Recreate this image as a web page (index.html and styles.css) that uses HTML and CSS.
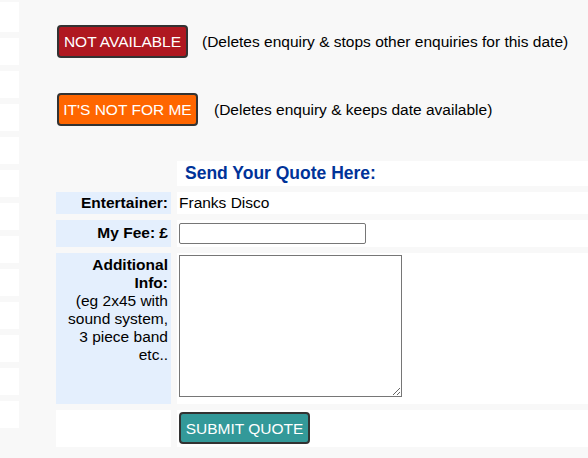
FILE: index.html
```html
<!DOCTYPE html>
<html lang="en">
<head>
    <meta charset="UTF-8">
    <meta name="viewport" content="width=device-width, initial-scale=1.0">
    <title>Enquiry Reply</title>
    <link rel="stylesheet" href="styles.css">
</head>
<body>
    <div class="page">
        <!-- edge of the enquiry list table -->
        <div class="side-list">
            <div class="side-cell first"></div>
            <div class="side-cell"></div>
            <div class="side-cell"></div>
            <div class="side-cell"></div>
            <div class="side-cell"></div>
            <div class="side-cell"></div>
            <div class="side-cell"></div>
            <div class="side-cell"></div>
            <div class="side-cell"></div>
            <div class="side-cell"></div>
            <div class="side-cell"></div>
            <div class="side-cell"></div>
            <div class="side-cell"></div>
        </div>

        <div class="main">
            <div class="action-row">
                <button class="btn btn-red">NOT AVAILABLE</button>
                <span class="action-note note-red">(Deletes enquiry &amp; stops other enquiries for this date)</span>
            </div>
            <div class="action-row second">
                <button class="btn btn-orange">IT'S NOT FOR ME</button>
                <span class="action-note note-orange">(Deletes enquiry &amp; keeps date available)</span>
            </div>

            <table class="quote-table">
                <tr class="row-head">
                    <td class="blank"></td>
                    <td class="value head">Send Your Quote Here:</td>
                </tr>
                <tr class="row-ent">
                    <td class="label">Entertainer:</td>
                    <td class="value">Franks Disco</td>
                </tr>
                <tr class="row-fee">
                    <td class="label">My Fee: &pound;</td>
                    <td class="value"><input type="text" class="fee-input"></td>
                </tr>
                <tr class="row-info">
                    <td class="label">Additional Info:<br><span class="hint">(eg 2x45 with sound system, 3 piece band etc..</span></td>
                    <td class="value"><textarea class="info-box"></textarea></td>
                </tr>
                <tr class="row-submit">
                    <td class="value"></td>
                    <td class="value"><button class="btn btn-teal">SUBMIT QUOTE</button></td>
                </tr>
            </table>
        </div>
    </div>
</body>
</html>
```

FILE: styles.css
```css
html, body {
    margin: 0;
    padding: 0;
    overflow: hidden;
}
body {
    background-color: #f8f8f8;
    color: #000000;
    font-family: "Liberation Sans", Arial, sans-serif;
    font-size: 15.5px;
}
.page {
    display: flex;
    width: 588px;
    height: 458px;
}
.side-list {
    width: 19px;
    flex-shrink: 0;
    display: flex;
    flex-direction: column;
    gap: 6px;
    padding-top: 2px;
}
.side-cell {
    height: 27px;
    background-color: #ffffff;
}
.side-cell.first {
    height: 30px;
}
.main {
    padding-left: 31px;
    padding-top: 25px;
    flex: 1;
    min-width: 0;
}
.action-row {
    display: flex;
    align-items: center;
    padding-left: 7px;
}
.action-row.second {
    margin-top: 35px;
}
.btn {
    font-family: "Liberation Sans", Arial, sans-serif;
    font-size: 15.5px;
    line-height: 17px;
    color: #ffffff;
    border: 2px solid #333333;
    border-radius: 4px;
    padding: 6px 3px;
    cursor: pointer;
}
.btn-red {
    background-color: #af1820;
    width: 131px;
}
.btn-orange {
    background-color: #ff6600;
    width: 141px;
}
.btn-teal {
    background-color: #339999;
    width: 131px;
    height: 32px;
    padding: 5px 3px;
    display: block;
}
.note-red {
    margin-left: 14px;
}
.note-orange {
    margin-left: 16px;
}
.quote-table {
    margin-top: 29px;
    border-spacing: 6px;
    width: 580px;
}
.quote-table td {
    padding: 0;
    vertical-align: top;
}
.blank {
    width: 115px;
}
.value {
    background-color: #ffffff;
    padding-left: 2px !important;
}
.head {
    height: 25px;
    color: #003399;
    font-weight: bold;
    font-size: 17.5px;
    line-height: 25px;
    padding-left: 8px !important;
}
.label {
    width: 102px;
    background-color: #e4effd;
    text-align: right;
    font-weight: bold;
    padding-left: 10px !important;
    padding-right: 3px !important;
    line-height: 18px;
}
.row-ent td {
    height: 22px;
    line-height: 22px;
}
.row-fee td {
    height: 27px;
    line-height: 27px;
}
.row-fee .label {
    line-height: 25px;
}
.fee-input {
    width: 187px;
    height: 21px;
    box-sizing: border-box;
    border: 1px solid #767676;
    border-radius: 2px;
    margin: 3px 0 0 0;
    vertical-align: top;
    background: #ffffff;
}
.row-info td {
    height: 148px;
}
.row-info .label {
    padding-top: 3px !important;
}
.hint {
    font-weight: normal;
}
.info-box {
    width: 223px;
    height: 142px;
    box-sizing: border-box;
    border: 1px solid #767676;
    margin: 2px 0 0 0;
    display: block;
    resize: both;
}
.row-submit td {
    height: 37px;
}
.row-submit .btn-teal {
    margin-top: 2px;
}
```
